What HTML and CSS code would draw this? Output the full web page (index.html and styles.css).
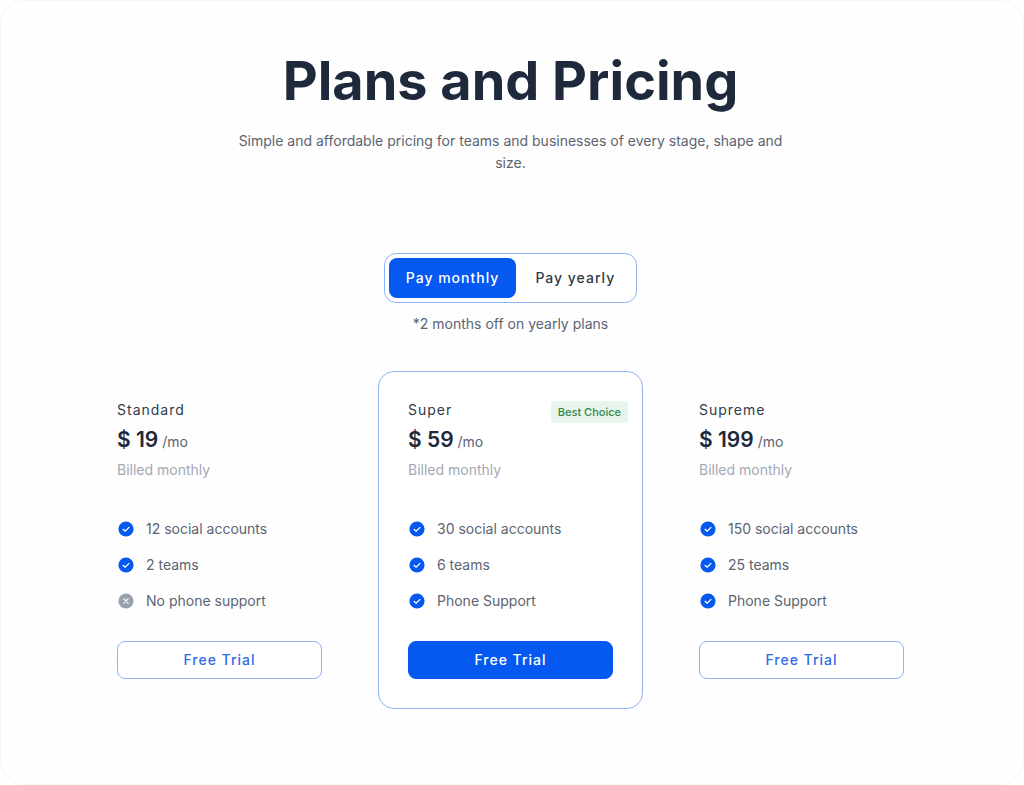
FILE: index.html
```html
<!DOCTYPE html>
<html lang="en">
<head>
<meta charset="utf-8">
<meta name="viewport" content="width=device-width, initial-scale=1">
<title>Plans and Pricing</title>
<link rel="stylesheet" href="styles.css">
</head>
<body>
<svg class="sprite" aria-hidden="true">
  <symbol id="check" viewBox="0 0 16 16"><circle cx="8" cy="8" r="7.6" fill="#0558f0"/><path d="M5 8.3l2.1 1.9L11 6.4" fill="none" stroke="#fff" stroke-width="1.2" stroke-linecap="round" stroke-linejoin="round"/></symbol>
  <symbol id="cross" viewBox="0 0 16 16"><circle cx="8" cy="8" r="7.6" fill="#99a0b0"/><path d="M5.9 5.9l4.2 4.2M10.1 5.9l-4.2 4.2" fill="none" stroke="#fff" stroke-width="1.3" stroke-linecap="round"/></symbol>
</svg>
<main class="panel">
  <h1 class="title">Plans and Pricing</h1>
  <p class="lead">Simple and affordable pricing for teams and businesses of every stage, shape and size.</p>
  <div class="toggle" role="group" aria-label="Billing period">
    <button class="option option-active" type="button" aria-pressed="true">Pay monthly</button>
    <button class="option" type="button" aria-pressed="false">Pay yearly</button>
  </div>
  <p class="note">*2 months off on yearly plans</p>
  <div class="plans">
    <section class="card">
      <h2 class="name">Standard</h2>
      <p class="price"><strong class="amount">$ 19</strong> /mo</p>
      <p class="billed">Billed monthly</p>
      <ul class="features">
        <li class="feature"><svg class="icon"><use href="#check"/></svg>12 social accounts</li>
        <li class="feature"><svg class="icon"><use href="#check"/></svg>2 teams</li>
        <li class="feature"><svg class="icon"><use href="#cross"/></svg>No phone support</li>
      </ul>
      <button class="trial" type="button">Free Trial</button>
    </section>
    <section class="card card-best">
      <span class="badge">Best Choice</span>
      <h2 class="name">Super</h2>
      <p class="price"><strong class="amount">$ 59</strong> /mo</p>
      <p class="billed">Billed monthly</p>
      <ul class="features">
        <li class="feature"><svg class="icon"><use href="#check"/></svg>30 social accounts</li>
        <li class="feature"><svg class="icon"><use href="#check"/></svg>6 teams</li>
        <li class="feature"><svg class="icon"><use href="#check"/></svg>Phone Support</li>
      </ul>
      <button class="trial trial-solid" type="button">Free Trial</button>
    </section>
    <section class="card">
      <h2 class="name">Supreme</h2>
      <p class="price"><strong class="amount">$ 199</strong> /mo</p>
      <p class="billed">Billed monthly</p>
      <ul class="features">
        <li class="feature"><svg class="icon"><use href="#check"/></svg>150 social accounts</li>
        <li class="feature"><svg class="icon"><use href="#check"/></svg>25 teams</li>
        <li class="feature"><svg class="icon"><use href="#check"/></svg>Phone Support</li>
      </ul>
      <button class="trial" type="button">Free Trial</button>
    </section>
  </div>
</main>
</body>
</html>
```
FILE: styles.css
```css
* { box-sizing: border-box; }
body { margin: 0; background: #fff; color: #5b6472; font: 14px/22px Inter, "Liberation Sans", sans-serif; }
h1, h2, p, ul { margin: 0; padding: 0; }
button { font: inherit; cursor: pointer; }
.sprite { display: none; }
.panel { display: flex; flex-direction: column; align-items: center; min-height: 100vh; padding: 44px 89px 48px 86px; border: 1px solid #f5f5f6; border-radius: 24px; background: #fefefe; }
.title { color: #1e293b; font-size: 54px; line-height: 72px; font-weight: 700; text-align: center; }
.lead { max-width: 576px; margin-top: 13px; text-align: center; }
.toggle { display: flex; gap: 2px; margin-top: 79px; padding: 4px; border: 1px solid #8fb3f7; border-radius: 12px; background: #fff; }
.option { height: 40px; padding: 0 17px; border: 0; border-radius: 8px; background: none; color: #333b49; font-weight: 500; letter-spacing: 1px; }
.option-active { background: #0558f0; color: #fff; }
.note { margin-top: 10px; }
.plans { display: grid; grid-template-columns: repeat(3, 1fr); gap: 26px; width: 100%; margin-top: 36px; }
.card { position: relative; padding: 26px 29px 29px; border: 1px solid #fafafb; border-radius: 16px; }
.card-best { border-color: #8fb3f7; background: #fff; }
.name { color: #333b49; font-size: 14px; line-height: 24px; font-weight: 400; letter-spacing: 1px; }
.price { margin-top: 2px; line-height: 32px; }
.amount { color: #1e293b; font-size: 21px; font-weight: 600; }
.billed { margin-top: 1px; color: #a3a8b5; }
.features { display: grid; gap: 14px; margin-top: 37px; list-style: none; }
.feature { display: flex; align-items: center; gap: 12px; }
.icon { width: 16px; height: 16px; margin-left: 1px; }
.trial { width: 100%; height: 38px; margin-top: 29px; border: 1px solid #8fb3f7; border-radius: 8px; background: #fff; color: #2f6be5; font-weight: 500; letter-spacing: 1px; }
.trial-solid { border-color: #0558f0; background: #0558f0; color: #fff; }
.badge { position: absolute; top: 29px; right: 14px; padding: 0 7px; border-radius: 4px; background: #e8f5ec; color: #2f8a48; font-size: 11px; font-weight: 500; }
```
